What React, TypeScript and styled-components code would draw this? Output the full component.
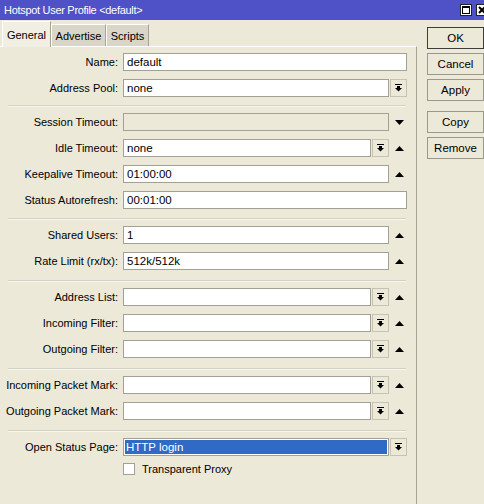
import React from 'react';
import styled, { createGlobalStyle } from 'styled-components';

const GlobalStyle = createGlobalStyle`
  html, body {
    margin: 0;
    padding: 0;
    background: #ece9d8;
  }
  body {
    font-family: "Liberation Sans", Arial, sans-serif;
    font-size: 11px;
    color: #000;
  }
`;

const Window = styled.div`
  width: 484px;
  height: 504px;
  overflow: hidden;
  background: #ece9d8;
`;

const TitleBar = styled.div`
  height: 20px;
  background: #4f51c6;
  display: flex;
  align-items: center;
  padding-left: 4px;
  color: #fff;
  font-size: 11px;
  letter-spacing: -0.3px;
`;

const Title = styled.span`
  flex: 1;
`;

const TitleButton = styled.div`
  width: 12px;
  height: 12px;
  background: #fff;
  border: 1px solid #222;
  box-sizing: border-box;
  margin-left: 4px;
  display: flex;
  align-items: center;
  justify-content: center;
  flex-shrink: 0;
`;

const Body = styled.div`
  display: flex;
`;

const LeftPane = styled.div`
  width: 417px;
  flex-shrink: 0;
`;

const TabStrip = styled.div`
  display: flex;
  align-items: flex-end;
  height: 26px;
  padding-left: 2px;
  position: relative;
  z-index: 1;
`;

const Tab = styled.div<{ $active?: boolean; $w: number }>`
  width: ${p => p.$w}px;
  height: ${p => (p.$active ? 26 : 22)}px;
  margin-bottom: ${p => (p.$active ? -1 : 0)}px;
  box-sizing: border-box;
  background: ${p => (p.$active ? '#f1efe4' : '#d9d5c7')};
  border-top: 1px solid #fff;
  border-left: 1px solid #fff;
  border-right: 1px solid #a6a393;
  display: flex;
  align-items: center;
  justify-content: center;
  font-size: 11px;
  padding-top: ${p => (p.$active ? 0 : 1)}px;
`;

const Panel = styled.div`
  display: flex;
  flex-direction: column;
  border-top: 1px solid #fff;
  border-right: 1px solid #a6a393;
  padding: 6px 0 40px 0;
  min-height: 460px;
  box-sizing: border-box;
`;

const FormRow = styled.div`
  display: flex;
  align-items: center;
  height: 18px;
  margin-bottom: 8px;
  flex-shrink: 0;
`;

const Label = styled.div`
  width: 123px;
  text-align: right;
  padding-right: 5px;
  box-sizing: border-box;
  white-space: nowrap;
  flex-shrink: 0;
`;

const Field = styled.div`
  width: 284px;
  height: 18px;
  display: flex;
`;

const Input = styled.div<{ $disabled?: boolean; $selected?: boolean }>`
  flex: 1;
  height: 18px;
  box-sizing: border-box;
  border: 1px solid #a3a196;
  background: ${p => (p.$disabled ? '#ece9d8' : '#fff')};
  padding-left: 3px;
  font-size: 11.5px;
  line-height: 16px;
  white-space: nowrap;
  overflow: hidden;
  ${p =>
    p.$selected &&
    `
    background: #316ac5;
    color: #fff;
    box-shadow: inset 0 0 0 1px #fff;
    padding-left: 2px;
  `}
`;

const DropButton = styled.div`
  width: 17px;
  height: 18px;
  margin-left: 1px;
  box-sizing: border-box;
  border: 1px solid #c6c3b5;
  background: #ece9d8;
  display: flex;
  align-items: center;
  justify-content: center;
  flex-shrink: 0;
`;

const ArrowCell = styled.div`
  width: 18px;
  height: 18px;
  display: flex;
  align-items: center;
  padding-left: 6px;
  box-sizing: border-box;
  flex-shrink: 0;
`;

const Separator = styled.div<{ $top: number }>`
  margin: ${p => p.$top}px 10px 6px 8px;
  height: 2px;
  flex-shrink: 0;
  box-sizing: border-box;
  border-top: 1px solid #d6d2c2;
  border-bottom: 1px solid #f7f6f0;
`;

const CheckRow = styled.div`
  display: flex;
  align-items: center;
  padding-left: 123px;
  margin-top: -1px;
`;

const CheckBox = styled.div`
  width: 12px;
  height: 12px;
  box-sizing: border-box;
  border: 1px solid #a3a196;
  background: #fff;
  margin-right: 7px;
`;

const ButtonColumn = styled.div`
  padding: 7px 0 0 10px;
  display: flex;
  flex-direction: column;
  gap: 4px;
`;

const Button = styled.div<{ $default?: boolean; $spaced?: boolean }>`
  width: 57px;
  height: 22px;
  box-sizing: border-box;
  border: 1px solid ${p => (p.$default ? '#3c3c3c' : '#9a988c')};
  background: #ece9d8;
  display: flex;
  align-items: center;
  justify-content: center;
  font-size: 11.5px;
  margin-top: ${p => (p.$spaced ? 6 : 0)}px;
`;

const DropIcon = () => (
  <svg width="7" height="8" viewBox="0 0 7 8">
    <rect x="0" y="0" width="7" height="1" fill="#000" />
    <rect x="2" y="2" width="3" height="2" fill="#000" />
    <polygon points="0,4 7,4 3.5,7.5" fill="#000" />
  </svg>
);

const UpArrow = () => (
  <svg width="9" height="5" viewBox="0 0 9 5">
    <polygon points="0,5 9,5 4.5,0" fill="#000" />
  </svg>
);

const DownArrow = () => (
  <svg width="9" height="5" viewBox="0 0 9 5">
    <polygon points="0,0 9,0 4.5,5" fill="#000" />
  </svg>
);

type Row = {
  label: string;
  value?: string;
  drop?: boolean;
  arrow?: 'up' | 'down';
  disabled?: boolean;
  selected?: boolean;
};

// space above each separator line, taken from the screenshot
const sepTops = [0, 0, 1, 2, 2, 2];

const sections: Row[][] = [
  [
    { label: 'Name:', value: 'default' },
    { label: 'Address Pool:', value: 'none', drop: true },
  ],
  [
    { label: 'Session Timeout:', arrow: 'down', disabled: true },
    { label: 'Idle Timeout:', value: 'none', drop: true, arrow: 'up' },
    { label: 'Keepalive Timeout:', value: '01:00:00', arrow: 'up' },
    { label: 'Status Autorefresh:', value: '00:01:00' },
  ],
  [
    { label: 'Shared Users:', value: '1', arrow: 'up' },
    { label: 'Rate Limit (rx/tx):', value: '512k/512k', arrow: 'up' },
  ],
  [
    { label: 'Address List:', drop: true, arrow: 'up' },
    { label: 'Incoming Filter:', drop: true, arrow: 'up' },
    { label: 'Outgoing Filter:', drop: true, arrow: 'up' },
  ],
  [
    { label: 'Incoming Packet Mark:', drop: true, arrow: 'up' },
    { label: 'Outgoing Packet Mark:', drop: true, arrow: 'up' },
  ],
  [{ label: 'Open Status Page:', value: 'HTTP login', drop: true, selected: true }],
];

function FormLine({ row }: { row: Row }) {
  return (
    <FormRow>
      <Label>{row.label}</Label>
      <Field>
        <Input $disabled={row.disabled} $selected={row.selected}>
          {row.value}
        </Input>
        {row.drop && (
          <DropButton>
            <DropIcon />
          </DropButton>
        )}
        {row.arrow && (
          <ArrowCell>{row.arrow === 'up' ? <UpArrow /> : <DownArrow />}</ArrowCell>
        )}
      </Field>
    </FormRow>
  );
}

export default function App() {
  return (
    <Window>
      <GlobalStyle />
      <TitleBar>
        <Title>Hotspot User Profile &lt;default&gt;</Title>
        <TitleButton>
          <svg width="8" height="8" viewBox="0 0 8 8">
            <rect x="0.5" y="0.5" width="7" height="7" fill="none" stroke="#000" />
            <rect x="0" y="0" width="8" height="2" fill="#000" />
          </svg>
        </TitleButton>
        <TitleButton style={{ marginRight: -4 }}>
          <svg width="8" height="8" viewBox="0 0 8 8">
            <path d="M1 1 L7 7 M7 1 L1 7" stroke="#000" strokeWidth="2" />
          </svg>
        </TitleButton>
      </TitleBar>
      <Body>
        <LeftPane>
          <TabStrip>
            <Tab $active $w={49}>General</Tab>
            <Tab $w={55}>Advertise</Tab>
            <Tab $w={43}>Scripts</Tab>
          </TabStrip>
          <Panel>
            {sections.map((rows, i) => (
              <React.Fragment key={i}>
                {i > 0 && <Separator $top={sepTops[i]} />}
                {rows.map(r => (
                  <FormLine key={r.label} row={r} />
                ))}
              </React.Fragment>
            ))}
            <CheckRow>
              <CheckBox />
              <span>Transparent Proxy</span>
            </CheckRow>
          </Panel>
        </LeftPane>
        <ButtonColumn>
          <Button $default>OK</Button>
          <Button>Cancel</Button>
          <Button>Apply</Button>
          <Button $spaced>Copy</Button>
          <Button>Remove</Button>
        </ButtonColumn>
      </Body>
    </Window>
  );
}
